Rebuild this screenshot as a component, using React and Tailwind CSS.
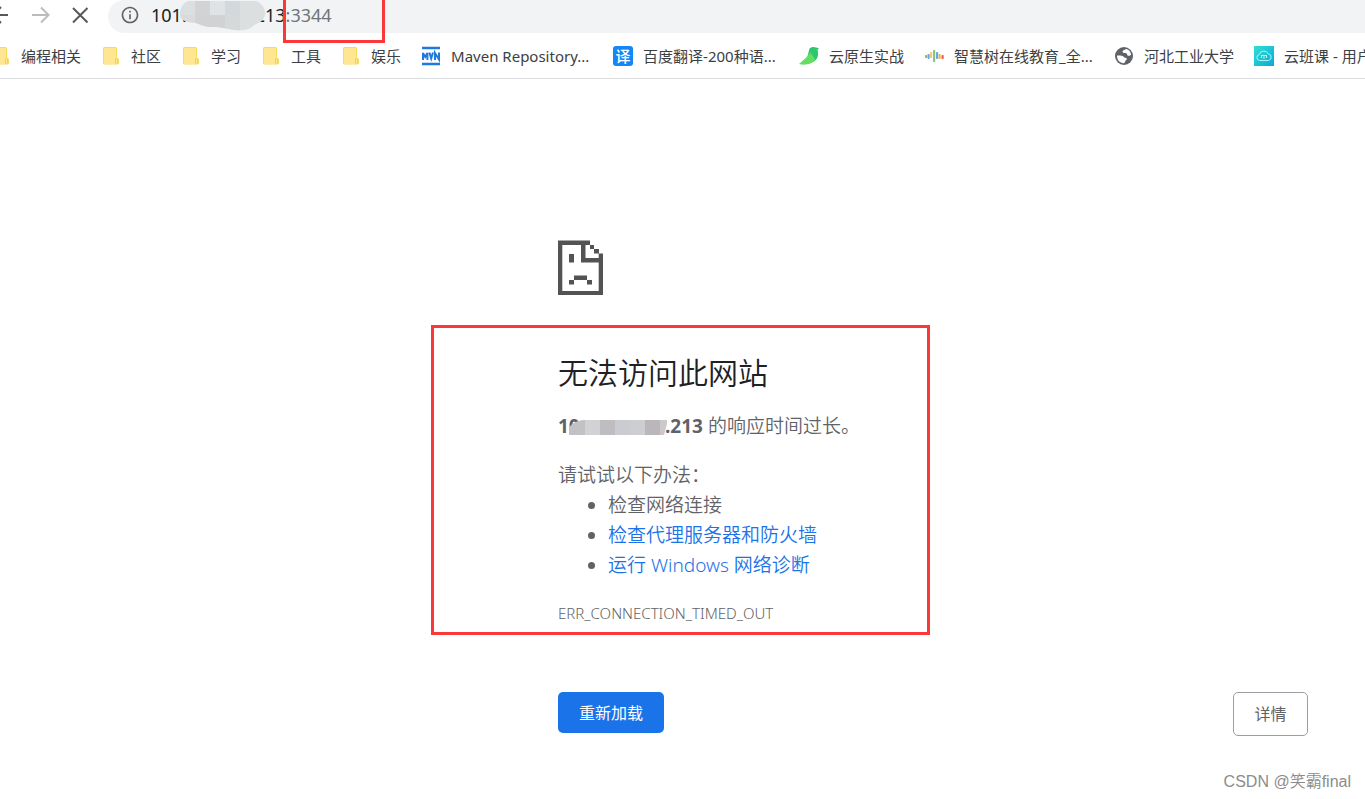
import React from 'react'
import { MdInfoOutline } from 'react-icons/md'

const FolderIcon = () => (
    <svg className="w-5 h-5 shrink-0" viewBox="0 0 20 20">
        <path d="M3.500 1h11A1.500 1.500 0 0 1 16 2.500V12h.5a1.500 1.500 0 0 1 1.500 1.500V17a1.500 1.500 0 0 1-1.500 1.500h-13A1.500 1.500 0 0 1 2 17V2.500A1.500 1.500 0 0 1 3.500 1z" fill="#fbd95f" />
        <path d="M3 2h12v10.500l-1 1V18H3z" fill="#ffe692" />
        <path d="M14.500 18v-4.500a1 1 0 0 1 2 0V17" fill="#ffe692" stroke="#f3c94a" strokeWidth="0.700" />
    </svg>
)

const MavenIcon = () => (
    <svg className="w-5 h-5 shrink-0" viewBox="0 0 20 20" fill="none" stroke="#1f7ae0">
        <path d="M1 2h18M1 18h18" strokeWidth="2.500" />
        <path d="M2 14V7l2.200 4L6.400 7v7M8.400 6.500l1.800 6 1.800-6M14 14V7l4 6.500v-7" strokeWidth="2" />
    </svg>
)

const TranslateIcon = () => (
    <span className="w-5 h-5 shrink-0 rounded-[3px] bg-[#1288f8] text-white text-[15px] leading-5 text-center font-medium">译</span>
)

const BirdIcon = () => (
    <svg className="w-5 h-5 shrink-0" viewBox="0 0 20 20">
        <path d="M10.500 2.500C12 .8 15 .4 17 1.600l3 .6-1.500 1.500c1.500 5 .3 10-4.500 12.300L8 12z" fill="#2dc76d" />
        <path d="M11 6.500c-2 4-6.500 7.500-11 11.500 5.500 1.500 13 .5 16-4-1-3-3-5.500-5-7.500z" fill="#63de62" />
    </svg>
)

const bars = [
    { x: 1, y: 9, h: 3, color: '#7cc06c' },
    { x: 3.5, y: 8, h: 5, color: '#6aa5ec' },
    { x: 6, y: 6, h: 6, color: '#f7c673' },
    { x: 9, y: 4, h: 12, color: '#86c67a' },
    { x: 12, y: 6, h: 7, color: '#6aa5ec' },
    { x: 14.5, y: 8, h: 5, color: '#f5b547' },
    { x: 17.5, y: 9, h: 4, color: '#e5604f' },
]

const BarsIcon = () => (
    <svg className="w-5 h-5 shrink-0" viewBox="0 0 20 20">
        {bars.map(b => (
            <rect key={b.x} x={b.x} y={b.y} width="2.200" height={b.h} rx="0.800" fill={b.color} />
        ))}
    </svg>
)

const GlobeIcon = () => (
    <svg className="w-5 h-5 shrink-0" viewBox="0 0 20 20">
        <circle cx="10" cy="10" r="9" fill="#5f6368" />
        <path d="M3 9.500c2 .2 4.500-.2 6 .8 1 .8 1.500 1.700 3 1.700 1.200.2 1 1.600 0 2.300-1 .8-.8 2.400-2 2.900C6 17.300 2.800 14 3 9.500z" fill="#fff" />
        <path d="M9 4.500c1.500-.3 2-1.700 3.500-1.500 2.500.8 4.300 3 4.600 5.500-1 1.500-2.600 1.700-3.600.8-.8-.8-.3-1.800-1.500-2.300-1.200-.3-2.300.3-3-.6-.5-.7-.6-1.400 0-1.900z" fill="#fff" />
    </svg>
)

const CloudIcon = () => (
    <svg className="w-5 h-5 shrink-0" viewBox="0 0 20 20">
        <defs>
            <linearGradient id="cloud" x1="0" y1="0" x2="1" y2="1">
                <stop offset="0" stopColor="#2fe0d0" />
                <stop offset="1" stopColor="#0aa9dc" />
            </linearGradient>
        </defs>
        <rect width="20" height="20" fill="url(#cloud)" />
        <g fill="none" stroke="#b5f5f3" strokeWidth="1">
            <path d="M5.500 14.500a3 3 0 0 1-.3-5.900 4.800 4.800 0 0 1 9-.8 3.400 3.400 0 0 1 .3 6.700z" />
            <path d="M7 9.500h6M7.500 9.500V12M12.500 9.500V12M10 9.500V13" />
        </g>
    </svg>
)

const bookmarks = [
    { name: '编程相关', icon: <FolderIcon /> },
    { name: '社区', icon: <FolderIcon /> },
    { name: '学习', icon: <FolderIcon /> },
    { name: '工具', icon: <FolderIcon /> },
    { name: '娱乐', icon: <FolderIcon /> },
    { name: 'Maven Repository...', icon: <MavenIcon />, width: 'min-w-[142px]' },
    { name: '百度翻译-200种语...', icon: <TranslateIcon />, width: 'min-w-[136px]' },
    { name: '云原生实战', icon: <BirdIcon /> },
    { name: '智慧树在线教育_全...', icon: <BarsIcon />, width: 'min-w-[140px]' },
    { name: '河北工业大学', icon: <GlobeIcon /> },
    { name: '云班课 - 用户', icon: <CloudIcon /> },
]

const Toolbar = () => (
    <div className="relative flex items-end h-[33px]">
        <div className="flex h-[33px] w-[108px] shrink-0 items-center overflow-hidden pb-[3px]">
            <button aria-label="后退" className="-ml-3 w-5 h-5">
                <svg viewBox="0 0 20 20" fill="none" stroke="#55595e" strokeWidth="2">
                    <path d="M20 10H5M13 2l-8 8 8 8" />
                </svg>
            </button>
            <button aria-label="前进" className="ml-[22px] w-5 h-5" disabled>
                <svg viewBox="0 0 20 20" fill="none" stroke="#babcbe" strokeWidth="2">
                    <path d="M2 10h15.500M11 2.500l7.500 7.500-7.500 7.500" />
                </svg>
            </button>
            <button aria-label="停止" className="ml-5 w-5 h-5">
                <svg viewBox="0 0 20 20" fill="none" stroke="#55595e" strokeWidth="2">
                    <path d="M3 3l14.500 14.500M17.500 3L3 17.500" />
                </svg>
            </button>
        </div>
        <div className="flex flex-1 items-center h-[33px] rounded-l-full bg-[#f1f3f4] pl-3 pb-[3px] text-lg text-[#202124]">
            <MdInfoOutline className="w-5 h-5 text-[#5f6368]" />
            <span className="ml-[11px]">101.</span>
            <span className="w-[68px]" />
            <span>213</span>
            <span className="text-[#70757a]">:3344</span>
        </div>
        {/* mosaic over the middle of the address */}
        <svg className="absolute left-[180px] top-0 w-[86px] h-[34px]" viewBox="0 0 86 34">
            <clipPath id="url-blur">
                <path d="M8 1h68c6 2 10 8 9 14-1 5-5 8-11 10-3 4-9 6-19 5-9-1-12-3-22-3-9 0-11-2-17-4C7 22 0 21 0 14 0 8 3 3 8 1z" />
            </clipPath>
            <g clipPath="url(#url-blur)">
                <rect width="86" height="34" fill="#dcdfe0" />
                <rect x="15" width="15" height="15" fill="#d2d3d4" />
                <rect x="30" width="15" height="15" fill="#dfe3e5" />
                <rect x="45" width="15" height="15" fill="#d3d8dc" />
                <rect y="15" width="15" height="19" fill="#d8dadb" />
                <rect x="15" y="15" width="30" height="19" fill="#d0d2d3" />
                <rect x="45" y="15" width="15" height="19" fill="#d6d9da" />
            </g>
        </svg>
        <div className="absolute left-[283px] -top-[3px] w-[102px] h-[46px] border-3 border-[#fb3838]" />
    </div>
)

const BookmarksBar = () => (
    <nav className="h-[46px] border-b border-[#dadce0] pt-[1px] overflow-hidden">
        <ul className="-ml-[9px] flex h-full items-center gap-5">
            {bookmarks.map(b => (
                <li key={b.name} className="shrink-0">
                    <a href="#" className="flex items-center gap-[10px] text-[15px] leading-5 text-[#3c4043] whitespace-nowrap">
                        {b.icon}
                        <span className={b.width}>{b.name}</span>
                    </a>
                </li>
            ))}
        </ul>
    </nav>
)

const SadPage = () => (
    <svg className="w-[45px] h-[55px]" viewBox="0 0 45 55" fill="#535353">
        <path d="M0 .5h32V5h-4.500v13H45v37H0zM4.300 5v46h36.400V22.500H23V5z" fillRule="evenodd" />
        <path d="M32 5h4v4h-4zM36 9h5v4.500h-5zM40.700 13.500H45V19h-4.300z" />
        <path d="M11 14h5v8.500h-5zM16 35.500h13V40H16zM11 40h5v4.500h-5zM29 40h5v4.500h-5z" />
    </svg>
)

const HostBlur = () => (
    <svg className="absolute left-[11px] top-[9px] w-[99px] h-[15px]" viewBox="0 0 99 15">
        <clipPath id="host-blur">
            <path d="M0 15V7c3-3 7-6 14-7h84v4l-3 11z" />
        </clipPath>
        <g clipPath="url(#host-blur)">
            <rect width="16" height="15" fill="#c3c1c3" />
            <rect x="16" width="15" height="15" fill="#d2d2d6" />
            <rect x="31" width="15" height="15" fill="#bfbdc0" />
            <rect x="46" width="15" height="15" fill="#cbccd1" />
            <rect x="61" width="15" height="15" fill="#cdced1" />
            <rect x="76" width="15" height="15" fill="#bab6ba" />
            <rect x="91" width="8" height="15" fill="#cbcacb" />
        </g>
    </svg>
)

const App = () => {
    return (
        <div className="overflow-hidden bg-white font-['Noto_Sans','Noto_Sans_CJK_SC',sans-serif]">
            <Toolbar />
            <BookmarksBar />

            <main className="pt-[161px] pl-[558px] pr-[57px] text-[19px] leading-[30px] text-[#5f6368] font-[350]">
                <SadPage />

                <section className="relative mt-[60px]">
                    <h1 className="text-3xl leading-9 text-[#202124] font-[350]">无法访问此网站</h1>
                    <p className="relative mt-5">
                        <span className="inline-block w-[107px] font-bold">10</span>
                        <span className="font-bold">.213</span> 的响应时间过长。
                        <HostBlur />
                    </p>
                    <p className="mt-[19px]">请试试以下办法：</p>
                    <ul className="list-disc pl-[50px]">
                        <li>检查网络连接</li>
                        <li><a href="#" className="text-[#1a73e8]">检查代理服务器和防火墙</a></li>
                        <li><a href="#" className="text-[#1a73e8]">运行 Windows 网络诊断</a></li>
                    </ul>
                    <p className="mt-[18px] text-[15px]">ERR_CONNECTION_TIMED_OUT</p>

                    <div className="absolute -left-[127px] -top-[30px] w-[499px] h-[310px] border-3 border-[#fb3838]" />
                </section>

                <div className="mt-[64px] flex items-start justify-between text-base leading-5 font-normal">
                    <button className="h-[41px] w-[106px] rounded-[5px] bg-[#1a73e8] text-white">重新加载</button>
                    <button className="h-11 w-[75px] rounded-[5px] border border-[#9aa0a6]">详情</button>
                </div>
            </main>

            <footer className="pt-[34px] pr-[14px] text-right text-base text-[#8c8c8c] font-[350] font-['Liberation_Sans','Noto_Sans_CJK_SC',sans-serif]">CSDN @笑霸final</footer>
        </div>
    )
}

export default App
